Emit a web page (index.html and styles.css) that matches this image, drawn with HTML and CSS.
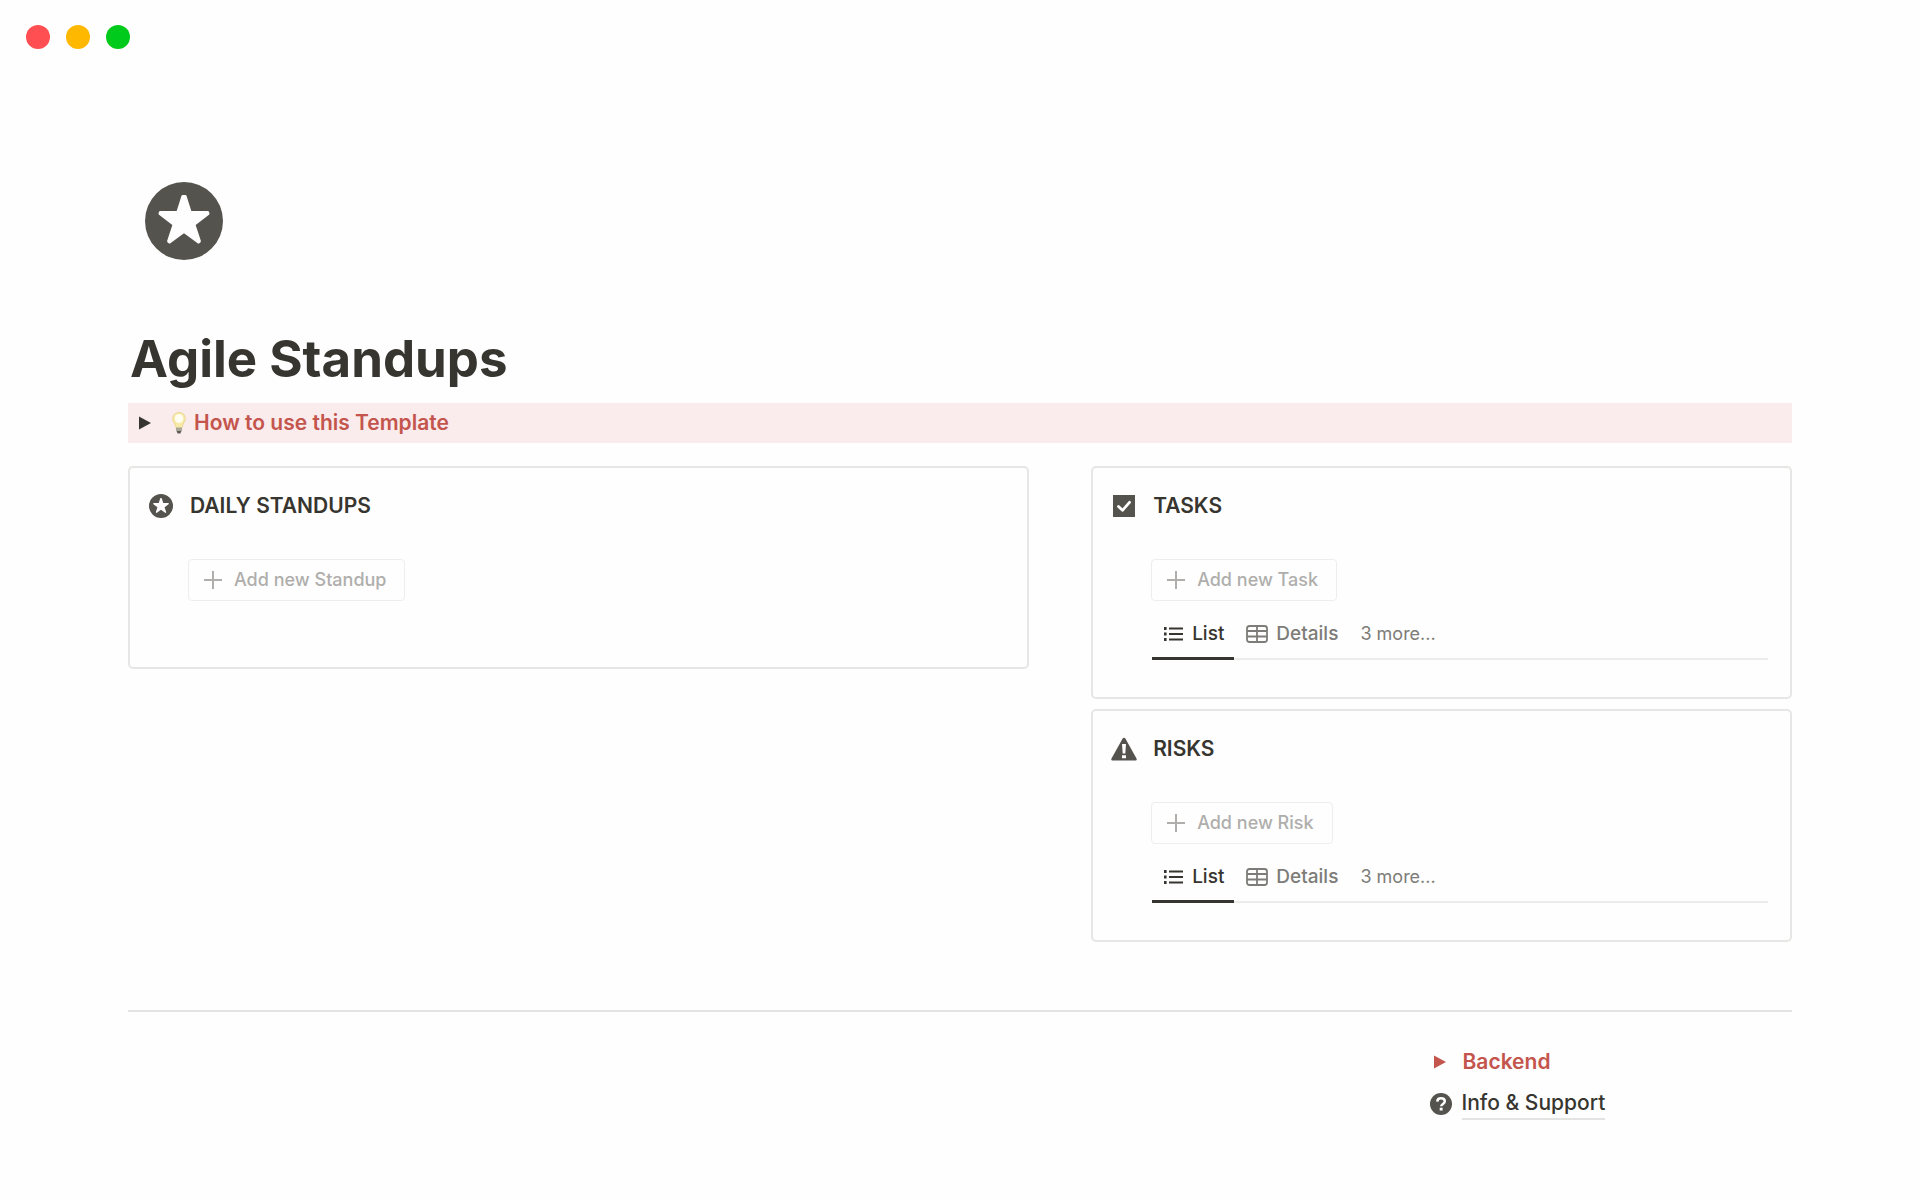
FILE: index.html
```html
<!DOCTYPE html>
<html lang="en">
<head>
    <meta charset="UTF-8">
    <meta name="viewport" content="width=device-width, initial-scale=1.0">
    <title>Agile Standups</title>
    <link rel="stylesheet" href="styles.css">
</head>
<body>
    <!-- Shared icons -->
    <svg class="icon-defs" aria-hidden="true">
        <symbol id="icon-star" viewBox="0 0 234 234">
            <path fill-rule="evenodd" d="M117 0a117 117 0 1 0 0 234a117 117 0 1 0 0-234zM113 39h8q3 0 4 4l14 44h50q3 0 4 5q1 5-2 7l-39 30 15 46q2 5-3 8q-4 3-7 0l-40-29-40 29q-3 3-7 0q-5-3-3-8l15-46-39-30q-3-2-2-7q1-5 4-5h50l14-44q1-4 4-4z"/>
        </symbol>
        <symbol id="icon-plus" viewBox="0 0 18 18">
            <path d="M8 0h2v8h8v2h-8v8h-2v-8h-8v-2h8z"/>
        </symbol>
        <symbol id="icon-list" viewBox="0 0 20 14">
            <path d="M0 0h2.600v3H0zM0 5.500h2.600v3H0zM0 11h2.600v3H0zM5 .5h14v2H5zM5 6h14v2H5zM5 11.500h14v2H5z"/>
        </symbol>
        <symbol id="icon-table" viewBox="0 0 22 18">
            <path fill="none" stroke="currentColor" stroke-width="1.800" d="M3.500 1h15q2.500 0 2.500 2.500v11q0 2.500-2.500 2.500h-15q-2.500 0-2.500-2.500v-11q0-2.500 2.500-2.500zM1 6h20M1 11.500h20M11 1v16"/>
        </symbol>
    </svg>

    <div class="window-bar">
        <span class="dot red"></span>
        <span class="dot yellow"></span>
        <span class="dot green"></span>
    </div>

    <main class="page">
        <svg class="page-icon" aria-hidden="true"><use href="#icon-star"/></svg>
        <h1>Agile Standups</h1>

        <details class="toggle banner">
            <summary>
                <svg class="arrow" viewBox="0 0 12 14" aria-hidden="true"><path d="M0 .5l12 6.500-12 6.500z"/></svg>
                <svg class="bulb" viewBox="0 0 14 22" aria-hidden="true">
                    <path fill="#f7e9a6" stroke="#e6d48a" stroke-width=".8" d="M7 .6C3 .6.7 3.300.7 6.600c0 2.600 1.400 4 2.300 5.800.6 1.200.7 2.600 1 3.600h6c.3-1 .4-2.400 1-3.600.9-1.800 2.300-3.200 2.300-5.800C13.300 3.300 11 .6 7 .6z"/>
                    <ellipse cx="7" cy="6.500" rx="4.200" ry="4.600" fill="#fffdf0"/>
                    <path fill="#a9a698" d="M4 15.500h6v3.500H4z"/>
                    <path fill="#5d5b55" d="M4.500 19h5l-1.200 2.500H5.700z"/>
                </svg>
                How to use this Template
            </summary>
        </details>

        <div class="columns">
            <section class="card daily">
                <h2><svg class="icon" aria-hidden="true"><use href="#icon-star"/></svg>DAILY STANDUPS</h2>
                <div class="card-body">
                    <button class="add-button"><svg class="plus" aria-hidden="true"><use href="#icon-plus"/></svg>Add new Standup</button>
                </div>
            </section>

            <div class="stack">
                <section class="card">
                    <h2>
                        <svg class="icon" viewBox="0 0 24 24" aria-hidden="true">
                            <path d="M1 1h22v22H1z"/>
                            <path fill="none" stroke="#fff" stroke-width="2.800" stroke-linecap="round" stroke-linejoin="round" d="M6.500 12.500l4 3.800 7-8"/>
                        </svg>TASKS
                    </h2>
                    <div class="card-body">
                        <button class="add-button"><svg class="plus" aria-hidden="true"><use href="#icon-plus"/></svg>Add new Task</button>
                        <div class="tabs">
                            <button class="tab active"><svg class="list" aria-hidden="true"><use href="#icon-list"/></svg>List</button>
                            <button class="tab"><svg class="grid" aria-hidden="true"><use href="#icon-table"/></svg>Details</button>
                            <button class="tab more">3 more...</button>
                        </div>
                    </div>
                </section>

                <section class="card">
                    <h2>
                        <svg class="icon wide" viewBox="0 0 26 24" aria-hidden="true">
                            <path d="M13 .8q1 0 1.500 1l11 19.700q.8 2-1 2h-23q-1.800 0-1-2l11-19.700q.5-1 1.500-1z"/>
                            <path fill="#fff" d="M11 7h4l-.7 9.500h-2.600zM11 18.300h4v3h-4z"/>
                        </svg>RISKS
                    </h2>
                    <div class="card-body">
                        <button class="add-button"><svg class="plus" aria-hidden="true"><use href="#icon-plus"/></svg>Add new Risk</button>
                        <div class="tabs">
                            <button class="tab active"><svg class="list" aria-hidden="true"><use href="#icon-list"/></svg>List</button>
                            <button class="tab"><svg class="grid" aria-hidden="true"><use href="#icon-table"/></svg>Details</button>
                            <button class="tab more">3 more...</button>
                        </div>
                    </div>
                </section>
            </div>
        </div>

        <hr>

        <div class="footer">
            <div class="footer-links">
                <details class="toggle backend">
                    <summary>
                        <svg class="arrow" viewBox="0 0 12 14" aria-hidden="true"><path d="M0 .5l12 6.500-12 6.500z"/></svg>
                        Backend
                    </summary>
                </details>
                <a class="support" href="#">
                    <svg class="help" viewBox="0 0 22 22" aria-hidden="true">
                        <circle cx="11" cy="11" r="11"/>
                        <path fill="none" stroke="#fff" stroke-width="2.500" d="M7.300 8.600c.1-2.300 1.600-3.300 3.700-3.300s3.800 1 3.800 3c0 2.600-3.600 2.600-3.600 5"/>
                        <path fill="#fff" d="M9.700 14.700h2.900v2.800H9.700z"/>
                    </svg>
                    <span>Info &amp; Support</span>
                </a>
            </div>
        </div>
    </main>
</body>
</html>
```

FILE: styles.css
```css
* {
    box-sizing: border-box;
}

body {
    margin: 0;
    background-color: #fefefe;
    color: #37352f;
    font-family: Inter, "Liberation Sans", sans-serif;
    font-size: 21px;
    line-height: 32px;
}

svg {
    display: block;
    flex: none;
    fill: currentColor;
}

button {
    font: inherit;
    background: none;
    cursor: pointer;
}

.icon-defs {
    position: absolute;
    width: 0;
    height: 0;
}

/* Window buttons */
.window-bar {
    display: flex;
    gap: 16px;
    padding: 25px 26px;
}

.dot {
    width: 24px;
    height: 24px;
    border-radius: 50%;
}

.red {
    background-color: #ff4f52;
}

.yellow {
    background-color: #ffb800;
}

.green {
    background-color: #00ca1b;
}

.page {
    padding: 108px 128px 64px;
}

.page-icon {
    width: 78px;
    height: 78px;
    margin-left: 17px;
    color: #55534e;
}

h1 {
    margin: 66px 0 12px;
    padding-left: 2px;
    font-size: 51px;
    line-height: 65px;
    font-weight: 700;
}

/* Toggles */
.toggle summary {
    display: flex;
    align-items: center;
    list-style: none;
    cursor: pointer;
    font-weight: 600;
    color: #c4554d;
}

.arrow {
    width: 12px;
    height: 14px;
}

.banner {
    padding: 4px 11px;
    background-color: #faebec;
}

.banner .arrow {
    color: #37352f;
}

.bulb {
    width: 14px;
    height: 22px;
    margin: 0 8px 0 21px;
}

/* Cards */
.columns {
    display: grid;
    grid-template-columns: 9fr 7fr;
    gap: 62px;
    align-items: start;
    margin-top: 23px;
}

.stack {
    display: grid;
    gap: 10px;
}

.card {
    padding: 22px 22px 37px 18px;
    border: 2px solid #e6e6e5;
    border-radius: 5px;
}

.daily {
    padding-bottom: 66px;
}

h2 {
    display: flex;
    align-items: center;
    gap: 16px;
    margin: 0;
    font-size: 21px;
    line-height: 32px;
    font-weight: 600;
}

.icon {
    width: 24px;
    height: 24px;
    margin: 0 1px;
    color: #55534e;
}

.wide {
    width: 26px;
    margin: 0;
}

.card-body {
    margin: 37px 0 0 40px;
}

.add-button {
    display: flex;
    align-items: center;
    gap: 12px;
    height: 42px;
    padding: 0 18px 0 15px;
    border: 1px solid #eeeeed;
    border-radius: 4px;
    color: #afaeac;
    font-size: 18px;
    font-weight: 500;
}

.plus {
    width: 18px;
    height: 18px;
}

.tabs {
    display: flex;
    margin-top: 14px;
    margin-left: 1px;
    border-bottom: 2px solid #ececeb;
}

.tab {
    display: flex;
    align-items: center;
    height: 45px;
    margin-bottom: -2px;
    padding: 0 10px 4px 12px;
    border: 0;
    border-bottom: 3px solid transparent;
    color: #7d7c78;
    font-size: 19px;
    font-weight: 500;
}

.active {
    border-bottom-color: #37352f;
    color: #37352f;
}

.more {
    font-size: 18px;
    font-weight: 400;
}

.list {
    width: 20px;
    height: 14px;
    margin-right: 8px;
}

.grid {
    width: 22px;
    height: 18px;
    margin-right: 8px;
}

/* Footer */
hr {
    height: 2px;
    margin: 68px 0 34px;
    border: 0;
    background-color: #e3e3e2;
}

.footer {
    display: grid;
    grid-template-columns: repeat(4, 1fr);
    gap: 62px;
}

.footer-links {
    grid-column: 4;
    padding-left: 7px;
}

.backend summary {
    gap: 17px;
    padding-left: 4px;
}

.support {
    display: flex;
    align-items: center;
    gap: 10px;
    margin-top: 10px;
    color: #37352f;
    font-weight: 500;
    text-decoration: none;
}

.support span {
    border-bottom: 2px solid #e3e3e2;
    line-height: 30px;
}

.help {
    width: 22px;
    height: 22px;
    color: #55534e;
}
```
